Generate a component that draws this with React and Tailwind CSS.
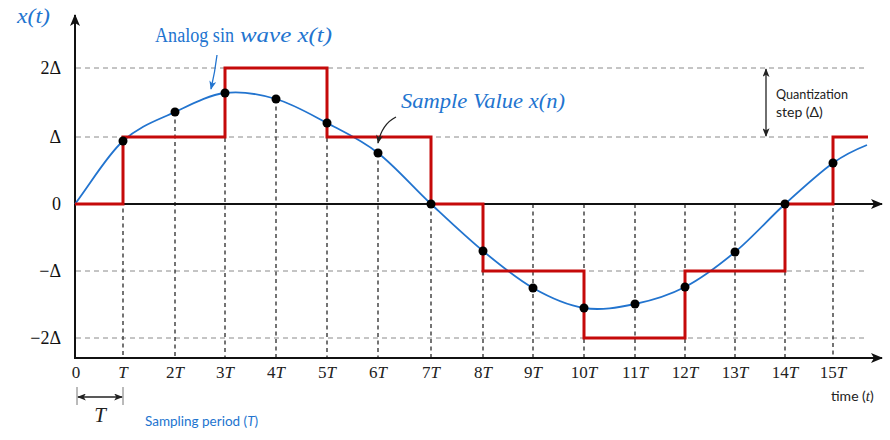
const xs = [75, 123, 175, 225, 276, 327, 378, 431, 483, 533, 584, 635, 685, 735, 785, 833];
const samples = [204, 141, 112, 93, 99, 123, 153, 204, 251, 288, 308, 304, 287, 252, 204, 163];

const levels = [
  { y: 68, label: '2Δ' },
  { y: 137, label: 'Δ' },
  { y: 204, label: '0' },
  { y: 271, label: '−Δ' },
  { y: 338, label: '−2Δ' },
];

// quantized staircase: [from x, to x, y]
const steps = [
  [75, 123, 204],
  [123, 225, 137],
  [225, 327, 68],
  [327, 431, 137],
  [431, 483, 204],
  [483, 584, 271],
  [584, 685, 338],
  [685, 785, 271],
  [785, 833, 204],
  [833, 868, 137],
];

const BLUE = '#2274cf';
const RED = '#c50a0a';
const serif = '"Liberation Serif", "DejaVu Serif", serif';
const sans = 'Lato, "Open Sans", sans-serif';

// catmull-rom through the points, first and last point are only guides
function smoothPath(pts) {
  let d = `M${pts[1][0]},${pts[1][1]}`;
  for (let i = 1; i < pts.length - 2; i++) {
    const p0 = pts[i - 1];
    const p1 = pts[i];
    const p2 = pts[i + 1];
    const p3 = pts[i + 2];
    const c1x = p1[0] + (p2[0] - p0[0]) / 6;
    const c1y = p1[1] + (p2[1] - p0[1]) / 6;
    const c2x = p2[0] - (p3[0] - p1[0]) / 6;
    const c2y = p2[1] - (p3[1] - p1[1]) / 6;
    d += ` C${c1x.toFixed(1)},${c1y.toFixed(1)} ${c2x.toFixed(1)},${c2y.toFixed(1)} ${p2[0]},${p2[1]}`;
  }
  return d;
}

const wavePts = [[27, 267], ...xs.map((x, i) => [x, samples[i]]), [867, 145], [890, 140]];

const stairD = steps
  .map(([a, b, y], i) => (i === 0 ? `M${a},${y} L${b},${y}` : `L${a},${y} L${b},${y}`))
  .join(' ');

function TickLabel({ n, x }) {
  if (n === 0) return <text x={x + 1} y={378} textAnchor="middle">0</text>;
  return (
    <text x={x} y={378} textAnchor="middle">
      {n > 1 && <tspan>{n}</tspan>}
      <tspan fontStyle="italic">T</tspan>
    </text>
  );
}

export default function App() {
  return (
    <div className="w-[890px] h-[440px] bg-white overflow-hidden">
      <svg width="890" height="440" viewBox="0 0 890 440">
        <defs>
          <marker id="ah" viewBox="0 0 12 10" refX="11" refY="5" markerWidth="12" markerHeight="10" markerUnits="userSpaceOnUse" orient="auto-start-reverse">
            <path d="M0,0 L12,5 L0,10 L3,5 Z" fill="#111" />
          </marker>
          <marker id="ahs" viewBox="0 0 10 8" refX="9" refY="4" markerWidth="9" markerHeight="7" markerUnits="userSpaceOnUse" orient="auto-start-reverse">
            <path d="M0,0 L10,4 L0,8 L2.5,4 Z" fill="#222" />
          </marker>
          <marker id="ahb" viewBox="0 0 10 8" refX="9" refY="4" markerWidth="9" markerHeight="7" markerUnits="userSpaceOnUse" orient="auto">
            <path d="M0,0 L10,4 L0,8 L2.5,4 Z" fill={BLUE} />
          </marker>
        </defs>

        {/* horizontal grid */}
        {levels.filter((l) => l.y !== 204).map((l) => (
          <line key={l.y} x1="76" x2="868" y1={l.y} y2={l.y} stroke="#8a8a8a" strokeWidth="1" strokeDasharray="5 4" />
        ))}

        {/* vertical sample guides */}
        {xs.slice(1).map((x, i) => (
          <line key={x} x1={x} x2={x} y1={Math.min(samples[i + 1], 204)} y2="357" stroke="#2a2a2a" strokeWidth="1.3" strokeDasharray="4 3.5" />
        ))}

        {/* axes */}
        <line x1="75" y1="359" x2="75" y2="15" stroke="#111" strokeWidth="2" markerEnd="url(#ah)" />
        <line x1="75" y1="204" x2="882" y2="204" stroke="#111" strokeWidth="2" markerEnd="url(#ah)" />
        <line x1="74" y1="358" x2="882" y2="358" stroke="#111" strokeWidth="2" markerEnd="url(#ah)" />

        {/* analog wave */}
        <path d={smoothPath(wavePts)} fill="none" stroke={BLUE} strokeWidth="1.8" />

        {/* quantized staircase */}
        <path d={stairD} fill="none" stroke={RED} strokeWidth="3" strokeLinejoin="miter" />

        {/* sample dots */}
        {xs.slice(1).map((x, i) => (
          <circle key={x} cx={x} cy={samples[i + 1]} r="4.5" fill="#000" />
        ))}

        {/* y labels */}
        <g fontFamily={serif} fontSize="18" fill="#111">
          {levels.map((l) => (
            <text key={l.y} x="61" y={l.y + 6} textAnchor="end">{l.label}</text>
          ))}
        </g>

        {/* x labels */}
        <g fontFamily={serif} fontSize="17" fill="#222">
          {xs.map((x, n) => (
            <TickLabel key={n} n={n} x={x} />
          ))}
        </g>

        {/* titles */}
        <text x="17" y="23" fontFamily={serif} fontStyle="italic" fontSize="21" fill={BLUE} textLength="33" lengthAdjust="spacingAndGlyphs">x(t)</text>
        <text x="155" y="42" fontFamily={serif} fontSize="20" fill={BLUE} textLength="79" lengthAdjust="spacingAndGlyphs">Analog sin</text>
        <text x="240" y="42" fontFamily={serif} fontStyle="italic" fontSize="21" fill={BLUE} textLength="92" lengthAdjust="spacingAndGlyphs">wave x(t)</text>
        <text x="401" y="108" fontFamily={serif} fontStyle="italic" fontSize="21" fill={BLUE} textLength="164" lengthAdjust="spacingAndGlyphs">Sample Value x(n)</text>

        {/* pointer arrows */}
        <path d="M217,55 Q215,72 211,89" fill="none" stroke={BLUE} strokeWidth="1.3" markerEnd="url(#ahb)" />
        <path d="M396,117 Q382,124 378,143" fill="none" stroke="#222" strokeWidth="1.3" markerEnd="url(#ahs)" />

        {/* quantization step */}
        <line x1="766" y1="69" x2="766" y2="136" stroke="#222" strokeWidth="1.3" markerStart="url(#ahs)" markerEnd="url(#ahs)" />
        <g fontFamily={sans} fontSize="14" fill="#222">
          <text x="776" y="99" textLength="72" lengthAdjust="spacingAndGlyphs">Quantization</text>
          <text x="776" y="117">step (Δ)</text>
        </g>

        {/* sampling period */}
        <line x1="77" y1="387" x2="77" y2="405" stroke="#777" strokeWidth="1" />
        <line x1="123" y1="387" x2="123" y2="405" stroke="#777" strokeWidth="1" />
        <line x1="78" y1="397" x2="122" y2="397" stroke="#222" strokeWidth="1.3" markerStart="url(#ahs)" markerEnd="url(#ahs)" />
        <text x="100" y="422" textAnchor="middle" fontFamily={serif} fontStyle="italic" fontSize="21" fill="#222">T</text>
        <text x="145" y="426" fontFamily={sans} fontSize="13.5" fill={BLUE}>Sampling period (<tspan fontStyle="italic">T</tspan>)</text>
        <text x="831" y="401" fontFamily={sans} fontSize="14" fill="#222">time (<tspan fontFamily={serif} fontStyle="italic" fontSize="15">t</tspan>)</text>
      </svg>
    </div>
  );
}
